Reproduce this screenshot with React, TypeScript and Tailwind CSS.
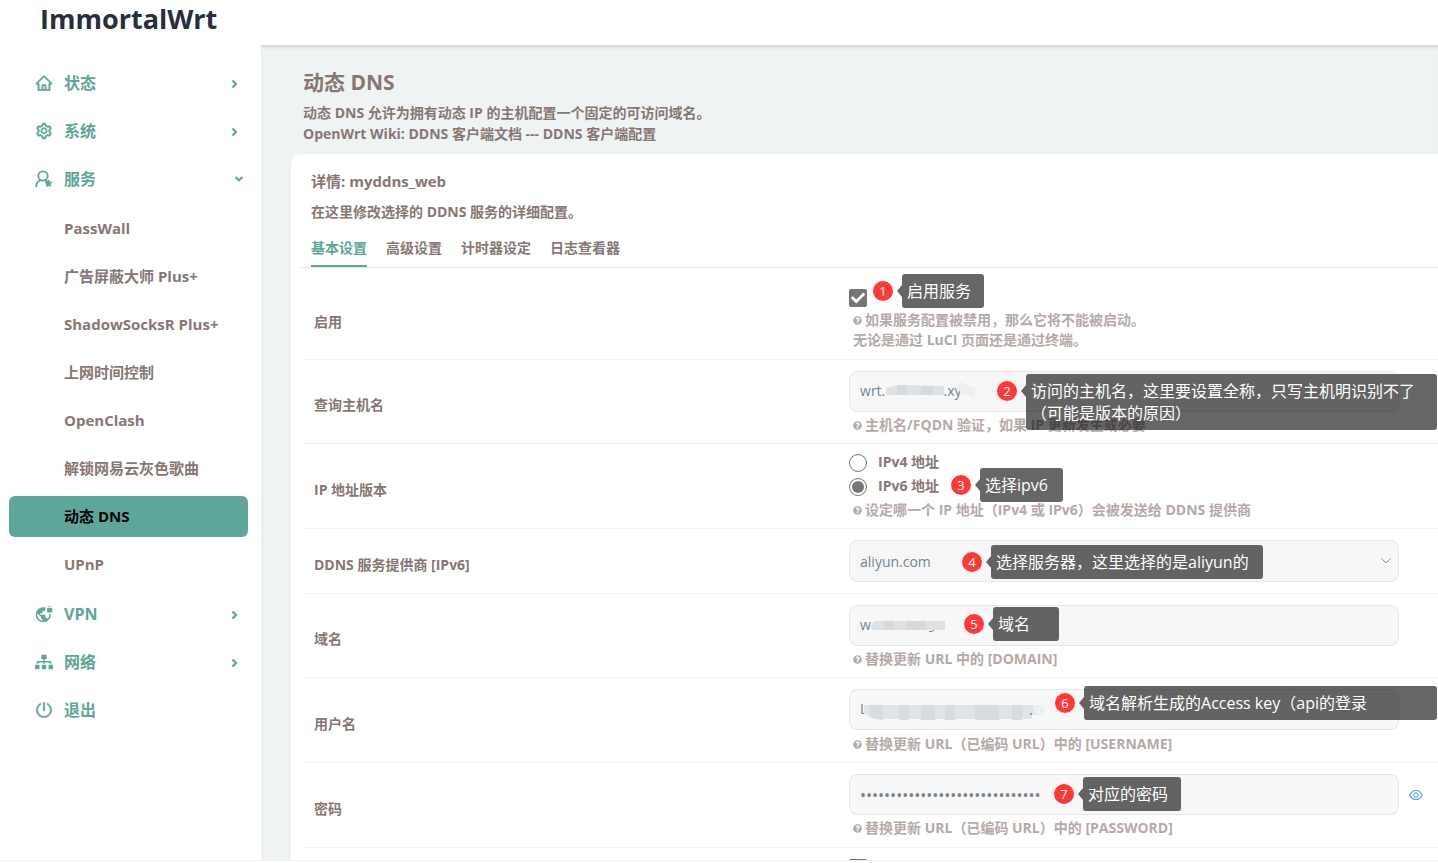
import type { ReactNode } from "react";
import { AiOutlineHome, AiOutlineSetting, AiOutlinePoweroff, AiOutlineEye } from "react-icons/ai";
import { MdVpnLock } from "react-icons/md";
import { FaSitemap, FaQuestionCircle, FaCheck } from "react-icons/fa";

type MenuItem = { label: string; icon: ReactNode; open?: boolean; leaf?: boolean };

function UserStar() {
  return (
    <svg viewBox="0 0 18 18" className="size-[18px]" fill="none" stroke="currentColor" strokeWidth="1.8" aria-hidden="true">
      <circle cx="8" cy="6" r="4.700" />
      <path d="M1.200 16.500c0-3 1.400-4.900 3.600-6M10 10.300l2 1.200" strokeLinecap="round" />
      <path
        d="M13.500 9.800l1.100 2.100 2.300.4-1.600 1.700.3 2.400-2.100-1-2.100 1 .3-2.400-1.600-1.700 2.300-.4z"
        fill="currentColor"
        strokeWidth=".8"
        strokeLinejoin="round"
      />
    </svg>
  );
}

const topMenu: MenuItem[] = [
  { label: "状态", icon: <AiOutlineHome strokeWidth={36} /> },
  { label: "系统", icon: <AiOutlineSetting strokeWidth={40} /> },
  { label: "服务", icon: <UserStar />, open: true },
];

const services = [
  "PassWall",
  "广告屏蔽大师 Plus+",
  "ShadowSocksR Plus+",
  "上网时间控制",
  "OpenClash",
  "解锁网易云灰色歌曲",
  "动态 DNS",
  "UPnP",
];

const bottomMenu: MenuItem[] = [
  { label: "VPN", icon: <MdVpnLock /> },
  { label: "网络", icon: <FaSitemap /> },
  { label: "退出", icon: <AiOutlinePoweroff strokeWidth={36} />, leaf: true },
];

function MenuLink({ item }: { item: MenuItem }) {
  return (
    <li>
      <a href="#" className="flex h-12 items-center pl-[35px] text-[#5ea699]">
        <span className="w-[29px] text-[18px]">{item.icon}</span>
        <span className="flex-1 text-base">{item.label}</span>
        {!item.leaf &&
          (item.open ? (
            <svg viewBox="0 0 10 10" className="mr-[17px] size-[10px]" fill="none" stroke="currentColor" strokeWidth="2.200" aria-hidden="true">
              <path d="M1.500 3L5 6.200 8.500 3" />
            </svg>
          ) : (
            <svg viewBox="0 0 10 10" className="mr-[22px] mt-[2px] size-[10px]" fill="none" stroke="currentColor" strokeWidth="2.200" aria-hidden="true">
              <path d="M3.500 1.500L7 5 3.500 8.500" />
            </svg>
          ))}
      </a>
    </li>
  );
}

function Sidebar() {
  return (
    <nav className="w-[261px] shrink-0 pt-[14px]">
      <ul>
        {topMenu.map((item) => (
          <MenuLink key={item.label} item={item} />
        ))}
      </ul>
      <ul className="mb-[2px] mt-px">
        {services.map((label) => (
          <li key={label} className="flex h-12 items-center pl-[9px] pr-[13px]">
            <a
              href="#"
              className={
                label === "动态 DNS"
                  ? "flex h-[41px] flex-1 items-center rounded-md bg-[#5ea699] pl-[55px] text-[15px] text-black"
                  : "flex h-[41px] flex-1 items-center rounded-md pl-[55px] text-[15px]"
              }
            >
              {label}
            </a>
          </li>
        ))}
      </ul>
      <ul>
        {bottomMenu.map((item) => (
          <MenuLink key={item.label} item={item} />
        ))}
      </ul>
    </nav>
  );
}

function Hint({ children }: { children: ReactNode }) {
  return (
    <p className="flex items-center gap-[3px] pl-[4px] text-[14px] leading-5 text-[#b5aaa7]">
      <FaQuestionCircle className="text-[9px]" />
      {children}
    </p>
  );
}

function Callout({ n, place, size, children }: { n: number; place: string; size: string; children: ReactNode }) {
  return (
    <div className={`absolute z-10 flex items-start font-normal text-white ${place}`}>
      <span className="mt-[7px] flex size-5 items-center justify-center rounded-full bg-[#ff3838] text-[13px] leading-5">
        {n}
      </span>
      <svg viewBox="0 0 5 12" className="ml-1 mt-[11px] h-3 w-[5px]" aria-hidden="true">
        <path d="M5 0v12L0 6z" fill="#000" fillOpacity=".6" />
      </svg>
      <div className={`rounded-[3px] bg-black/60 py-[6px] pl-[5px] text-base leading-[22px] whitespace-nowrap ${size}`}>
        {children}
      </div>
    </div>
  );
}

function Row({ label, htmlFor, first, children }: { label: string; htmlFor?: string; first?: boolean; children: ReactNode }) {
  return (
    <div className="grid grid-cols-[48.2%_1fr] border-b border-[#f3f3f3]">
      <label
        htmlFor={htmlFor}
        className={first ? "flex items-center pl-[13px] pt-4 text-[14px]" : "flex items-center pl-[13px] pt-[6px] text-[14px]"}
      >
        {label}
      </label>
      <div className="relative">{children}</div>
    </div>
  );
}

const fieldBase =
  "min-w-0 flex-1 rounded-lg border border-[#e2e9e8] bg-[#f7f7f7] px-[10px] font-normal text-[#75848f] outline-none";

export default function App() {
  return (
    <div className="flex min-h-screen flex-col overflow-hidden bg-white font-['Open_Sans','Noto_Sans_CJK_SC',sans-serif] font-bold text-[#877773]">
      <header className="flex h-[45px] items-start">
        <a href="#" className="pl-10 text-[27px] leading-[38px] text-[#252f3e]">
          ImmortalWrt
        </a>
      </header>
      <div className="flex flex-1 items-stretch">
        <Sidebar />
        <main className="flex min-w-0 flex-1 flex-col bg-[#eff3f4] shadow-[inset_0_5px_5px_-4px_rgba(0,0,0,0.18)]">
          <section className="px-[42px] pb-[10px] pt-[23px]">
            <h1 className="text-[21px] leading-7">动态 DNS</h1>
            <p className="mt-[6px] text-[14px] leading-[21px]">
              动态 DNS 允许为拥有动态 IP 的主机配置一个固定的可访问域名。
              <br />
              <a href="#">OpenWrt Wiki: DDNS 客户端文档</a> --- <a href="#">DDNS 客户端配置</a>
            </p>
          </section>
          <section className="ml-[30px] flex-1 rounded-tl-[10px] bg-white pl-[10px]">
            <h2 className="pl-[10px] pt-[15px] text-[15px] leading-6">详情: myddns_web</h2>
            <p className="pl-[10px] pt-[9px] text-[14px] leading-5">在这里修改选择的 DDNS 服务的详细配置。</p>
            <div role="tablist" className="mt-[15px] flex gap-[19px] border-b border-[#e3e5e6] pl-[10px] text-[14px] leading-[22px]">
              <button role="tab" aria-selected="true" className="border-b-2 border-[#5ea699] pb-[6px] text-[#5ea699]">
                基本设置
              </button>
              <button role="tab" className="pb-2">高级设置</button>
              <button role="tab" className="pb-2">计时器设定</button>
              <button role="tab" className="pb-2">日志查看器</button>
            </div>

            <Row label="启用" htmlFor="enabled" first>
              <div className="pb-[9px] pt-[21px]">
                <span className="relative mb-[3px] block size-[18px]">
                  <input
                    id="enabled"
                    type="checkbox"
                    defaultChecked
                    className="block size-[18px] appearance-none rounded-[2px] border-2 border-[#767676] checked:bg-[#767676]"
                  />
                  <FaCheck className="pointer-events-none absolute left-[2px] top-[2px] text-[14px] text-white" />
                </span>
                <Hint>如果服务配置被禁用，那么它将不能被启动。</Hint>
                <p className="pl-[4px] text-[14px] leading-5 text-[#b5aaa7]">无论是通过 LuCI 页面还是通过终端。</p>
              </div>
              <Callout n={1} place="left-6 top-[6px]" size="w-[82px]">启用服务</Callout>
            </Row>

            <Row label="查询主机名" htmlFor="lookup">
              <div className="pb-2 pt-[11px]">
                <div className="flex pr-[39px]">
                  <input id="lookup" className={`${fieldBase} h-[41px] pb-[3px] text-[14px]`} defaultValue={"wrt." + "\u00a0".repeat(16) + ".xy"} />
                </div>
                <svg viewBox="0 0 95 20" className="absolute left-[34px] top-[11px] mt-[10px] h-5 w-[95px]" aria-hidden="true">
                  <path d="M3 7l12-3 46 1 0 9-58 0z" fill="#dfe2e4" />
                  <path d="M14 4h10v10H14zM38 5h12v9H38z" fill="#d6dadd" />
                  <path d="M72 4l6-3 14 6v10l-13-4-3-4z" fill="#eeeff0" />
                </svg>
                <div className="pt-[3px]">
                  <Hint>主机名/FQDN 验证，如果 IP 更新发生或必要</Hint>
                </div>
              </div>
              <Callout n={2} place="left-[148px] top-[14px]" size="w-[411px]">
                访问的主机名，这里要设置全称，只写主机明识别不了
                <br />
                （可能是版本的原因）
              </Callout>
            </Row>

            <Row label="IP 地址版本">
              <div className="pb-2 pt-[5px] text-[14px]">
                <label className="flex h-6 items-center">
                  <input
                    type="radio"
                    name="ipver"
                    className="mr-[11px] mt-1 size-[18px] appearance-none rounded-full border border-[#767676] bg-white"
                  />
                  IPv4 地址
                </label>
                <label className="mb-[3px] flex h-6 items-center">
                  <input
                    type="radio"
                    name="ipver"
                    defaultChecked
                    className="mr-[11px] mt-1 size-[18px] appearance-none rounded-full border border-[#767676] bg-clip-content p-[2px] checked:bg-[#767676]"
                  />
                  IPv6 地址
                </label>
                <Hint>设定哪一个 IP 地址（IPv4 或 IPv6）会被发送给 DDNS 提供商</Hint>
              </div>
              <Callout n={3} place="left-[102px] top-6" size="w-[83px]">选择ipv6</Callout>
            </Row>

            <Row label="DDNS 服务提供商 [IPv6]" htmlFor="provider">
              <div className="flex pb-[11px] pr-[39px] pt-[11px]">
                <select id="provider" className={`${fieldBase} h-[42px] appearance-none text-[14px]`} defaultValue="aliyun.com">
                  <option>aliyun.com</option>
                </select>
                <svg viewBox="0 0 10 6" className="pointer-events-none absolute right-[47px] top-[29px] h-[6px] w-[10px]" aria-hidden="true">
                  <path d="M.5.5L5 5 9.500.5" fill="none" stroke="#8a8f93" />
                </svg>
              </div>
              <Callout n={4} place="left-[113px] top-4" size="w-[272px]">选择服务器，这里选择的是aliyun的</Callout>
            </Row>

            <Row label="域名" htmlFor="domain">
              <div className="pb-2 pt-[11px]">
                <div className="flex pr-[39px]">
                  <input id="domain" className={`${fieldBase} h-[41px] pb-[3px] text-[14px]`} defaultValue="w" />
                </div>
                <svg viewBox="0 0 76 14" className="absolute left-[21px] top-[26px] h-[14px] w-[76px]" aria-hidden="true">
                  <path d="M5 1h70v9H3L0 7z" fill="#dfe2e4" />
                  <path d="M14 1h10v9H14zM36 1h12v9H36zM48 1h8v9h-8z" fill="#d6dadd" />
                  <path d="M59 11.500h3l2-1.500" fill="none" stroke="#75848f" />
                </svg>
                <div className="pt-[3px]">
                  <Hint>替换更新 URL 中的 [DOMAIN]</Hint>
                </div>
              </div>
              <Callout n={5} place="left-[115px] top-[13px]" size="w-[66px]">域名</Callout>
            </Row>

            <Row label="用户名" htmlFor="username">
              <div className="pb-2 pt-[11px]">
                <div className="flex pr-[39px]">
                  <input id="username" className={`${fieldBase} h-[41px] pb-[3px] text-[14px]`} defaultValue="L" />
                </div>
                <svg viewBox="0 0 182 18" className="absolute left-[15px] top-[25px] h-[18px] w-[182px]" aria-hidden="true">
                  <path d="M0 2h171l7 1 3 4-4 5-9 0v4H12L0 11z" fill="#e1e4e6" />
                  <path d="M169 2l9 1 3 4-4 5-6-1z" fill="#edeff0" />
                  <path d="M6 2h13v15l-8-1-5-2zM35 2h10v15H35zM57 2h14v15H57zM81 2h10v15H81zM111 2h24v15h-24zM148 2h10v15h-10z" fill="#d9dcdf" />
                  <circle cx="167" cy="11" r="1" fill="#75848f" />
                </svg>
                <div className="pt-1">
                  <Hint>替换更新 URL（已编码 URL）中的 [USERNAME]</Hint>
                </div>
              </div>
              <Callout n={6} place="left-[206px] top-2" size="w-[353px]">域名解析生成的Access key（api的登录</Callout>
            </Row>

            <Row label="密码" htmlFor="password">
              <div className="pb-[9px] pt-[11px]">
                <div className="flex items-center">
                  <input id="password" type="password" className={`${fieldBase} h-[41px] text-base`} defaultValue={"0".repeat(30)} />
                  <button aria-label="显示密码" className="flex w-[39px] justify-center pr-[5px] text-base text-[#4a9fe0]">
                    <AiOutlineEye />
                  </button>
                </div>
                <div className="pt-[3px]">
                  <Hint>替换更新 URL（已编码 URL）中的 [PASSWORD]</Hint>
                </div>
              </div>
              <Callout n={7} place="left-[205px] top-[14px]" size="w-[98px]">对应的密码</Callout>
            </Row>

            <div className="grid h-3 grid-cols-[48.2%_1fr] overflow-hidden">
              <span />
              <input
                type="checkbox"
                aria-label="启用"
                className="mt-[11px] size-[18px] appearance-none rounded-[2px] border-2 border-[#767676]"
              />
            </div>
          </section>
        </main>
      </div>
      <footer className="h-[3px] border-t border-[#eeeeee] bg-white" />
    </div>
  );
}
